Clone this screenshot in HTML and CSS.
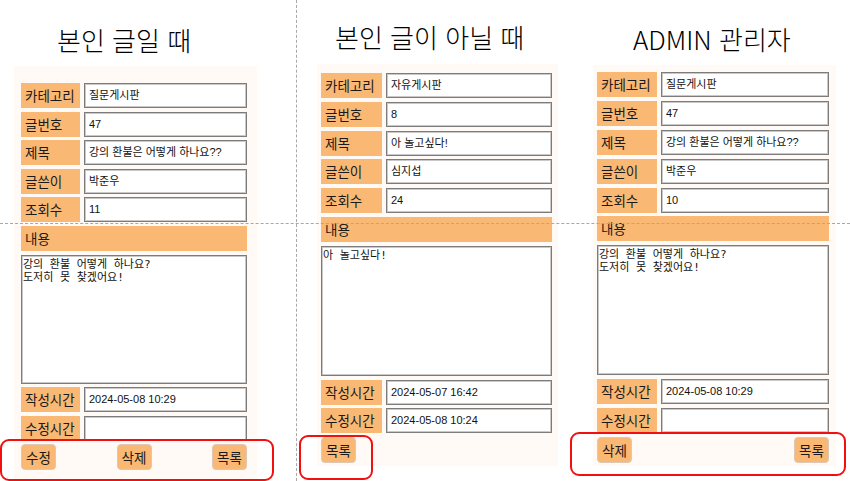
FILE: index.html
```html
<!DOCTYPE html>
<html lang="ko">
<head>
<meta charset="utf-8">
<title>게시글 보기</title>
<link rel="stylesheet" href="styles.css">
</head>
<body>
<div class="board">
  <section class="col col-own">
    <h1 class="title">본인 글일 때</h1>
    <div class="panel">
      <div class="lbl">카테고리</div><div class="field">질문게시판</div>
      <div class="lbl">글번호</div><div class="field">47</div>
      <div class="lbl">제목</div><div class="field">강의 환불은 어떻게 하나요??</div>
      <div class="lbl">글쓴이</div><div class="field">박준우</div>
      <div class="lbl">조회수</div><div class="field">11</div>
      <div class="lbl wide">내용</div>
      <div class="area wide">강의 환불 어떻게 하나요?
도저히 못 찾겠어요!</div>
      <div class="lbl">작성시간</div><div class="field">2024-05-08 10:29</div>
      <div class="lbl">수정시간</div><div class="field"></div>
      <div class="actions wide"><span class="btn">수정</span><span class="btn">삭제</span><span class="btn">목록</span></div>
    </div>
  </section>
  <section class="col col-other">
    <h1 class="title">본인 글이 아닐 때</h1>
    <div class="panel">
      <div class="lbl">카테고리</div><div class="field">자유게시판</div>
      <div class="lbl">글번호</div><div class="field">8</div>
      <div class="lbl">제목</div><div class="field">아 놀고싶다!</div>
      <div class="lbl">글쓴이</div><div class="field">심지섭</div>
      <div class="lbl">조회수</div><div class="field">24</div>
      <div class="lbl wide">내용</div>
      <div class="area wide">아 놀고싶다!</div>
      <div class="lbl">작성시간</div><div class="field">2024-05-07 16:42</div>
      <div class="lbl">수정시간</div><div class="field">2024-05-08 10:24</div>
      <div class="actions wide"><span class="btn">목록</span></div>
    </div>
  </section>
  <section class="col col-admin">
    <h1 class="title">ADMIN 관리자</h1>
    <div class="panel">
      <div class="lbl">카테고리</div><div class="field">질문게시판</div>
      <div class="lbl">글번호</div><div class="field">47</div>
      <div class="lbl">제목</div><div class="field">강의 환불은 어떻게 하나요??</div>
      <div class="lbl">글쓴이</div><div class="field">박준우</div>
      <div class="lbl">조회수</div><div class="field">10</div>
      <div class="lbl wide">내용</div>
      <div class="area wide">강의 환불 어떻게 하나요?
도저히 못 찾겠어요!</div>
      <div class="lbl">작성시간</div><div class="field">2024-05-08 10:29</div>
      <div class="lbl">수정시간</div><div class="field"></div>
      <div class="actions wide"><span class="btn">삭제</span><span class="btn">목록</span></div>
    </div>
  </section>

  <div class="guide guide-v"></div>
  <div class="guide guide-h"></div>
  <div class="mark mark-own"></div>
  <div class="mark mark-other"></div>
  <div class="mark mark-admin"></div>
</div>
</body>
</html>
```

FILE: styles.css
```css
* { box-sizing: border-box; }

html, body {
  margin: 0;
  padding: 0;
  background: #ffffff;
}

body {
  width: 850px;
  height: 481px;
  overflow: hidden;
  font-family: "Noto Sans CJK KR", "Noto Sans", sans-serif;
  color: #111;
}

.board {
  position: relative;
  display: flex;
  align-items: flex-start;
  height: 481px;
}

.col { flex: none; }

.col-own   { margin-left: 14px; width: 243px; }
.col-other { margin-left: 60px; width: 241px; }
.col-admin { margin-left: 35px; width: 243px; }

.title {
  margin: 0;
  font-size: 26px;
  font-weight: 300;
  line-height: 34px;
  white-space: nowrap;
  color: #000;
}

.col-own .title   { padding: 23px 0 0 43px; height: 66px; }
.col-other .title { padding: 20px 0 0 18px; height: 64px; }
.col-admin .title { padding: 22px 0 0 40px; height: 65px; }

.panel {
  background: #fffaf5;
  display: grid;
  grid-template-columns: var(--lw) var(--iw);
  grid-template-rows: repeat(6, 25px) auto 25px 25px 26px;
  column-gap: 4px;
  row-gap: var(--gap);
}

.col-own .panel   { --lw: 59px; --iw: 163px; --gap: 3.6px; padding: 17px 10px 20px 7px; }
.col-other .panel { --lw: 61px; --iw: 166px; --gap: 3.8px; padding: 9px 6px 3px 4px; }
.col-admin .panel { --lw: 60px; --iw: 168px; --gap: 3.9px; padding: 7px 7px 3px 4px; }

.wide { grid-column: 1 / -1; }

.lbl {
  background: #f9b874;
  font-size: 13.5px;
  line-height: 25px;
  padding-left: 4px;
  color: #1a1a1a;
  white-space: nowrap;
}

.field {
  background: #fff;
  border: 1px solid #7c7c7c;
  box-shadow: inset 0 0 0 1px #c9c9c9;
  font-family: "Liberation Sans", "Noto Sans CJK KR", sans-serif;
  font-size: 11px;
  line-height: 23px;
  padding-left: 4px;
  color: #111;
  white-space: nowrap;
  overflow: hidden;
}

.area {
  height: 130px;
  background: #fff;
  border: 1px solid #7c7c7c;
  box-shadow: inset 0 0 0 1px #c9c9c9;
  font-family: "DejaVu Sans Mono", "Noto Sans CJK KR", monospace;
  font-size: 11px;
  line-height: 13px;
  padding: 2px 1px;
  white-space: pre;
  color: #111;
}

.col-own .area { height: 129px; }

.actions {
  display: flex;
  justify-content: space-between;
  align-items: center;
}

.btn {
  display: inline-flex;
  align-items: center;
  justify-content: center;
  width: 35px;
  height: 26px;
  background: #f9b874;
  border: 1px solid #dcc8b4;
  border-radius: 4px;
  font-size: 13.5px;
  color: #1a1a1a;
}

.guide { position: absolute; pointer-events: none; }

.guide-v {
  left: 296px;
  top: 0;
  height: 481px;
  width: 0;
  border-left: 1px dashed #a8a8a8;
}

.guide-h {
  left: 0;
  top: 223px;
  width: 850px;
  height: 0;
  border-top: 1px dashed #a8a8a8;
}

.mark {
  position: absolute;
  border: 2px solid #f01010;
  border-radius: 9px;
  pointer-events: none;
}

.mark-own   { left: 0;     top: 439px; width: 274px; height: 42px; }
.mark-other { left: 299px; top: 435px; width: 74px;  height: 45px; }
.mark-admin { left: 570px; top: 432px; width: 276px; height: 44px; }
```
